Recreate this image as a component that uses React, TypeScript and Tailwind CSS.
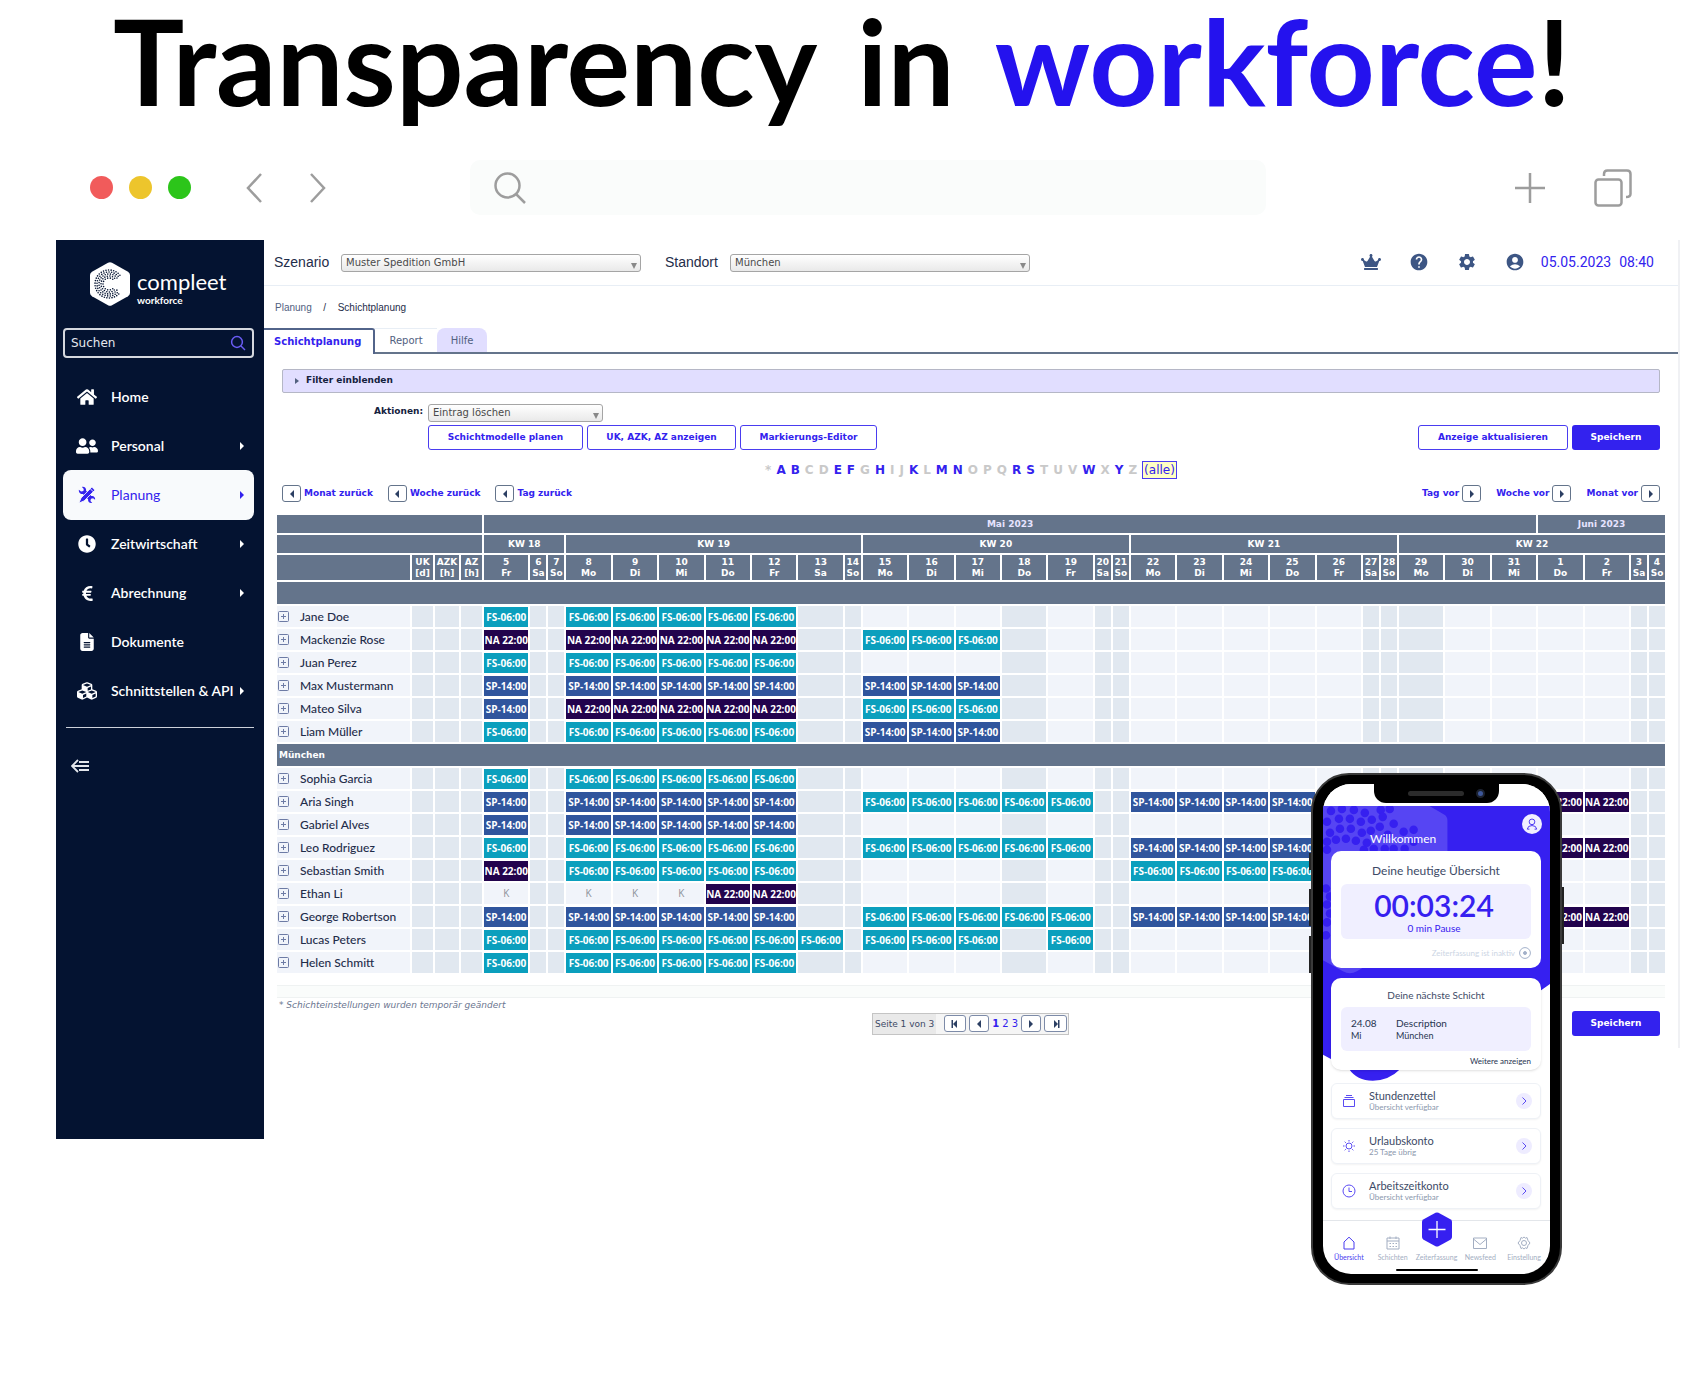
import type { ReactNode } from "react";
import clsx from "clsx";
import { FaClock, FaCrown, FaCubes, FaEuroSign, FaHome, FaUserFriends } from "react-icons/fa";
import { FaFileLines } from "react-icons/fa6";
import { MdAccountCircle, MdHelp, MdSettings } from "react-icons/md";

const days = [
  { day: 5, name: "Fr" },
  { day: 6, name: "Sa", narrow: true, off: true },
  { day: 7, name: "So", narrow: true, off: true },
  { day: 8, name: "Mo" },
  { day: 9, name: "Di" },
  { day: 10, name: "Mi" },
  { day: 11, name: "Do" },
  { day: 12, name: "Fr" },
  { day: 13, name: "Sa", off: true },
  { day: 14, name: "So", narrow: true, off: true },
  { day: 15, name: "Mo" },
  { day: 16, name: "Di" },
  { day: 17, name: "Mi" },
  { day: 18, name: "Do", off: true },
  { day: 19, name: "Fr" },
  { day: 20, name: "Sa", narrow: true, off: true },
  { day: 21, name: "So", narrow: true, off: true },
  { day: 22, name: "Mo" },
  { day: 23, name: "Di" },
  { day: 24, name: "Mi" },
  { day: 25, name: "Do" },
  { day: 26, name: "Fr" },
  { day: 27, name: "Sa", narrow: true, off: true },
  { day: 28, name: "So", narrow: true, off: true },
  { day: 29, name: "Mo", off: true },
  { day: 30, name: "Di" },
  { day: 31, name: "Mi" },
  { day: 1, name: "Do" },
  { day: 2, name: "Fr" },
  { day: 3, name: "Sa", narrow: true, off: true },
  { day: 4, name: "So", narrow: true, off: true },
];

// one letter per day, weeks split by a blank: F = early, S = late, N = night, K = sick
const groups = [
  {
    title: "",
    people: [
      { name: "Jane Doe", plan: "F.. FFFFF.. ....... ....... ......." },
      { name: "Mackenzie Rose", plan: "N.. NNNNN.. FFF.... ....... ......." },
      { name: "Juan Perez", plan: "F.. FFFFF.. ....... ....... ......." },
      { name: "Max Mustermann", plan: "S.. SSSSS.. SSS.... ....... ......." },
      { name: "Mateo Silva", plan: "S.. NNNNN.. FFF.... ....... ......." },
      { name: "Liam Müller", plan: "F.. FFFFF.. SSS.... ....... ......." },
    ],
  },
  {
    title: "München",
    people: [
      { name: "Sophia Garcia", plan: "F.. FFFFF.. ....... ....... ......." },
      { name: "Aria Singh", plan: "S.. SSSSS.. FFFFF.. SSSS... ...NN.." },
      { name: "Gabriel Alves", plan: "S.. SSSSS.. ....... ....... ......." },
      { name: "Leo Rodriguez", plan: "F.. FFFFF.. FFFFF.. SSSS... ...NN.." },
      { name: "Sebastian Smith", plan: "N.. FFFFF.. ....... FFFF... ......." },
      { name: "Ethan Li", plan: "K.. KKKNN.. ....... ....... ......." },
      { name: "George Robertson", plan: "S.. SSSSS.. FFFFF.. SSSS... ...NN.." },
      { name: "Lucas Peters", plan: "F.. FFFFFF. FFF.F.. ....... ......." },
      { name: "Helen Schmitt", plan: "F.. FFFFF.. ....... ....... ......." },
    ],
  },
];

const shifts: Record<string, { label: string; cls: string }> = {
  F: { label: "FS-06:00", cls: "bg-[#0b9fbd] text-white font-bold border-t" },
  S: { label: "SP-14:00", cls: "bg-[#30559d] text-white font-bold border-t" },
  N: { label: "NA 22:00", cls: "bg-[#22034d] text-white font-bold border-t" },
  K: { label: "K", cls: "bg-[#f1f4fa] text-[#8d929b]" },
};

const letters = "*ABCDEFGHIJKLMNOPQRSTUVWXYZ".split("");
const activeLetters = "ABEFHKMNRSWY";

const sans = "font-['DejaVu_Sans',sans-serif]";
const head = "border-white border-r-2 border-b-2 bg-[#64748b] p-0 text-center font-bold";

function PlanIcon() {
  return (
    <svg viewBox="0 0 20 20" className="size-[18px]" fill="currentColor">
      <path d="M1 4.2 3.4 6.2 6 5.6 6.4 3.2 4.4 1C6.600 .4 8.800 1.800 9 4.200L9 5.400 14.800 11.200C17.400 10.600 19.600 12.800 19 15.400L16.800 13.600 14.400 14.200 13.800 16.600 15.800 18.800C13 19.600 10.800 17.400 11.200 14.600L5.400 8.800C2.800 9.400.4 7 1 4.200Z" />
      <path
        d="M15.400 1.200 18.800 4.600 6.800 16.600 1 19 3.400 13.200Z"
        stroke="#f8fafc"
        strokeWidth="1"
      />
      <path d="M13.600 3 17 6.400" stroke="#f8fafc" strokeWidth="1" />
    </svg>
  );
}

const menu: { label: string; icon: ReactNode; sub?: boolean; active?: boolean }[] = [
  { label: "Home", icon: <FaHome size={20} /> },
  { label: "Personal", icon: <FaUserFriends size={22} />, sub: true },
  { label: "Planung", icon: <PlanIcon />, sub: true, active: true },
  { label: "Zeitwirtschaft", icon: <FaClock size={18} />, sub: true },
  { label: "Abrechnung", icon: <FaEuroSign size={17} />, sub: true },
  { label: "Dokumente", icon: <FaFileLines size={18} /> },
  { label: "Schnittstellen & API", icon: <FaCubes size={20} />, sub: true },
];

function Logo() {
  const dots: ReactNode[] = [];
  [6, 8, 10, 12, 14].forEach((r, ring) => {
    const n = 14 + ring * 5;
    for (let i = 0; i < n; i++) {
      const a = (i / n) * Math.PI * 2 + ring * 0.2;
      // leave the opening of the C free
      if (Math.cos(a) > 0.8) continue;
      dots.push(<circle key={`${r}-${i}`} cx={19 + r * Math.cos(a)} cy={22 + r * Math.sin(a)} r="0.8" />);
    }
  });
  return (
    <svg viewBox="0 0 40 44" className="h-[44px] w-10 shrink-0">
      <path
        d="M18 .8Q20 -.2 22 .8L38 9.800Q40 11 40 13V31Q40 33 38 34.200L22 43.200Q20 44.200 18 43.200L2 34.200Q0 33 0 31V13Q0 11 2 9.800Z"
        fill="#fff"
      />
      <g fill="#041331">{dots}</g>
    </svg>
  );
}

function Caret({ left = false, bar = false }: { left?: boolean; bar?: boolean }) {
  return (
    <svg viewBox="0 0 8 8" className={clsx("size-2", left && "rotate-180")} fill="currentColor">
      <path d="M2 0 6 4 2 8Z" />
      {bar && <path d="M6 0H7.500V8H6Z" />}
    </svg>
  );
}

function Select({ id, value, className }: { id: string; value: string; className: string }) {
  return (
    <div className={clsx("relative", className)}>
      <select
        id={id}
        className="block h-[18px] w-full appearance-none rounded-[3px] border border-[#a5a5a5] bg-linear-to-b from-white to-[#e9e9e9] pl-1 text-[10px] leading-4 text-[#4a4a4a]"
      >
        <option>{value}</option>
      </select>
      <svg viewBox="0 0 6 6" className="pointer-events-none absolute right-1 bottom-[3px] size-[6px]" fill="#888">
        <path d="M0 0H6L3 6Z" />
      </svg>
    </div>
  );
}

function Sidebar() {
  return (
    <aside className="flex w-[208px] shrink-0 flex-col bg-[#041331] font-[Lato,sans-serif] text-white">
      <div className="flex h-[88px] items-center pl-[34px]">
        <Logo />
        <div className="pt-2 pl-[7px]">
          <div className="text-[22px] leading-6">compleet</div>
          <div className="text-[10px] leading-3 font-bold">workforce</div>
        </div>
      </div>
      <div className="mr-[10px] ml-[7px] flex h-[30px] items-center rounded-[4px] border-2 border-[#d5d8de] px-[6px]">
        <input
          aria-label="Suchen"
          placeholder="Suchen"
          className={clsx("min-w-0 flex-1 text-xs outline-none placeholder:text-[#e6e8ee]", sans)}
        />
        <svg viewBox="0 0 16 16" className="size-4" fill="none" stroke="#6a5cf5" strokeWidth="1.500">
          <circle cx="7" cy="7" r="5.400" />
          <path d="M11 11 15 15" />
        </svg>
      </div>
      <nav className="mt-[14px] mr-[10px] ml-[7px] flex flex-col">
        {menu.map((m) => (
          <a
            key={m.label}
            href="#"
            className={clsx(
              "flex h-[50px] items-center rounded-lg pr-2 text-sm -mb-px",
              m.active ? "bg-[#f8fafc] text-[#3322ee]" : "font-semibold"
            )}
          >
            <span className="flex w-12 justify-center">{m.icon}</span>
            <span className="flex-1 whitespace-nowrap">{m.label}</span>
            {m.sub && <Caret />}
          </a>
        ))}
      </nav>
      <div className="mx-[10px] mt-3 h-px bg-[#cdd1da]" />
      <button aria-label="Menü einklappen" className="mt-[31px] ml-[15px] w-5">
        <svg viewBox="0 0 20 14" className="h-[14px] w-5" fill="none" stroke="#e3e6ec" strokeWidth="1.800">
          <path d="M7 1 1 7 7 13M1 7H18M8 3H18M8 11H18" />
        </svg>
      </button>
    </aside>
  );
}

function Header() {
  return (
    <header className="flex h-[46px] items-center border-b border-[#e8eef5] pr-6 pb-[2px] pl-[10px] text-[#1f2d4a]">
      <label htmlFor="szenario" className="w-[67px] font-['Liberation_Sans',sans-serif] text-sm">
        Szenario
      </label>
      <Select id="szenario" value="Muster Spedition GmbH" className="mt-[2px] w-[300px]" />
      <label htmlFor="standort" className="ml-6 w-[65px] font-['Liberation_Sans',sans-serif] text-sm">
        Standort
      </label>
      <Select id="standort" value="München" className="mt-[2px] w-[300px]" />
      <div className="mr-[2px] ml-auto flex items-center text-[#3d5684]">
        <button aria-label="Premium" className="flex w-12 justify-center"><FaCrown size={20} /></button>
        <button aria-label="Hilfe" className="flex w-12 justify-center"><MdHelp size={20} /></button>
        <button aria-label="Einstellungen" className="flex w-12 justify-center"><MdSettings size={20} /></button>
        <button aria-label="Konto" className="flex w-12 justify-center"><MdAccountCircle size={20} /></button>
      </div>
      <div className="flex gap-2 font-[Roboto,sans-serif] text-sm text-[#3322ee]">
        <span>05.05.2023</span>
        <span>08:40</span>
      </div>
    </header>
  );
}

function OutlineButton({ children, className }: { children: string; className: string }) {
  return (
    <button
      className={clsx(
        "h-[25px] rounded-[3px] border border-[#4a3cf0] bg-white text-[9px] font-bold whitespace-nowrap text-[#3322ee]",
        className
      )}
    >
      {children}
    </button>
  );
}

function SaveButton() {
  return <button className="h-[25px] w-[88px] rounded-[3px] bg-[#3322ee] text-[9px] font-bold text-white">Speichern</button>;
}

function Jump({ label, back = false }: { label: string; back?: boolean }) {
  return (
    <button className={clsx("flex items-center gap-[3px] text-[9px] font-bold text-[#3322ee]", !back && "flex-row-reverse")}>
      <span className="flex h-[17px] w-[19px] items-center justify-center rounded-[3px] border border-[#64748b] text-[#2c3f63]">
        <Caret left={back} />
      </span>
      {label}
    </button>
  );
}

function Schedule() {
  return (
    <table className="w-full table-fixed border-separate border-spacing-0 text-[9px] leading-[11px] text-white">
      <colgroup>
        <col className="w-[135px]" />
        <col className="w-[23px]" />
        <col className="w-[26px]" />
        <col className="w-[23px]" />
        {days.map((d, i) => (
          <col key={i} className={d.narrow ? "w-[18px]" : ""} />
        ))}
      </colgroup>
      <thead>
        <tr className="h-5 text-[#e6e3ff]">
          <th colSpan={4} className={head} />
          <th colSpan={27} className={head}>Mai 2023</th>
          <th colSpan={4} className={head}>Juni 2023</th>
        </tr>
        <tr className="h-5">
          <th colSpan={4} className={head} />
          <th colSpan={3} className={head}>KW 18</th>
          <th colSpan={7} className={head}>KW 19</th>
          <th colSpan={7} className={head}>KW 20</th>
          <th colSpan={7} className={head}>KW 21</th>
          <th colSpan={7} className={head}>KW 22</th>
        </tr>
        <tr className="h-[27px]">
          <th className={head} />
          <th className={head}>UK<br />[d]</th>
          <th className={head}>AZK<br />[h]</th>
          <th className={head}>AZ<br />[h]</th>
          {days.map((d, i) => (
            <th key={i} className={head}>
              {d.day}<br />{d.name}
            </th>
          ))}
        </tr>
      </thead>
      {groups.map((g) => (
        <tbody key={g.title}>
          <tr className="h-6">
            <th colSpan={35} className="border-r-2 border-b-2 border-white bg-[#64748b] px-[2px] text-left font-bold">
              {g.title}
            </th>
          </tr>
          {g.people.map((p) => (
            <tr key={p.name} className="h-[23px] font-['Open_Sans',sans-serif] text-[10px]">
              <td className="border-r-2 border-b-2 border-white bg-[#f1f4fa] p-0">
                <div className="flex items-center gap-[11px] pl-px">
                  <button aria-label={p.name + " aufklappen"} className="text-[#6d7ba5]">
                    <svg viewBox="0 0 11 11" className="size-[11px]" fill="none" stroke="currentColor">
                      <rect x=".5" y=".5" width="10" height="10" rx="1" />
                      <path d="M3 5.500H8M5.500 3V8" />
                    </svg>
                  </button>
                  <span className="font-[Lato,sans-serif] text-xs leading-4 font-medium text-[#1f2d4a]">{p.name}</span>
                </div>
              </td>
              {[0, 1, 2].map((n) => (
                <td key={n} className="border-r-2 border-b-2 border-white bg-[#e1e8f0] p-0" />
              ))}
              {p.plan.replaceAll(" ", "").split("").map((c, i) => (
                <td
                  key={i}
                  className={clsx(
                    "border-r-2 border-b-2 border-white p-0 text-center whitespace-nowrap",
                    shifts[c] ? shifts[c].cls : days[i].off ? "bg-[#e1e8f0]" : "bg-[#f1f4fa]"
                  )}
                >
                  {shifts[c]?.label}
                </td>
              ))}
            </tr>
          ))}
        </tbody>
      ))}
    </table>
  );
}

const pagerBtn = "flex h-[17px] items-center justify-center rounded-[3px] border border-[#7d8ba8] bg-white text-[#2c3f63]";

function Planner() {
  return (
    <main className={clsx("min-w-0 flex-1 self-start border-r-2 border-[#f0f1f4] pb-3 text-[10px]", sans)}>
      <Header />
      <div className="flex h-[42px] items-center pl-[11px] font-['Liberation_Sans',sans-serif] text-[10px] text-[#1f2d4a]">
        <a href="#" className="text-[#52617f]">Planung</a>
        <span className="w-[26px] text-center">/</span>
        <span>Schichtplanung</span>
      </div>
      <div className="flex h-[26px] items-stretch">
        <button className="w-[111px] rounded-tr-[3px] border-t-2 border-r-2 border-[#52648a] pb-[2px] pl-[10px] text-left font-bold text-[#3322ee]">
          Schichtplanung
        </button>
        <div className="flex flex-1 border-b-2 border-[#64748b] text-[#52617f]">
          <button className="w-[62px] border-t border-[#e8eef5]">Report</button>
          <button className="w-[50px] rounded-t-lg bg-[#e1deff] pt-px">Hilfe</button>
        </div>
      </div>
      <div className="px-[13px]">
        <div className="px-[5px]">
          <button className="mt-[15px] flex h-6 w-full items-center gap-[7px] rounded-[2px] border border-[#b5b7c6] bg-[#e1deff] pl-3 text-[9px] font-bold text-[#14213d]">
            <svg viewBox="0 0 4 6" className="h-[6px] w-1" fill="#52617f">
              <path d="M0 0 4 3 0 6Z" />
            </svg>
            Filter einblenden
          </button>
          <div className="mt-[11px] flex h-[18px] items-start pl-[92px]">
            <label htmlFor="aktionen" className="w-[54px] text-[9px] leading-[14px] font-bold text-[#14213d]">
              Aktionen:
            </label>
            <Select id="aktionen" value="Eintrag löschen" className="w-[175px]" />
          </div>
          <div className="mt-[3px] flex gap-1 pl-[146px]">
            <OutlineButton className="w-[155px]">Schichtmodelle planen</OutlineButton>
            <OutlineButton className="w-[149px]">UK, AZK, AZ anzeigen</OutlineButton>
            <OutlineButton className="w-[137px]">Markierungs-Editor</OutlineButton>
            <OutlineButton className="ml-auto w-[150px]">Anzeige aktualisieren</OutlineButton>
            <SaveButton />
          </div>
          <div className="mt-[11px] flex h-[18px] items-center justify-center gap-[5px] text-xs font-bold text-[#c9c9c9]">
            {letters.map((l) =>
              activeLetters.includes(l) ? (
                <a key={l} href="#" className="text-[#3322ee]">{l}</a>
              ) : (
                <span key={l} className="font-semibold">{l}</span>
              )
            )}
            <a href="#" className="border border-[#4a3cf0] bg-[#ffffc4] px-px leading-4 font-normal text-[#3322ee]">
              (alle)
            </a>
          </div>
          <div className="mt-[6px] flex justify-between">
            <div className="flex gap-[15px]">
              <Jump back label="Monat zurück" />
              <Jump back label="Woche zurück" />
              <Jump back label="Tag zurück" />
            </div>
            <div className="flex gap-[15px]">
              <Jump label="Tag vor" />
              <Jump label="Woche vor" />
              <Jump label="Monat vor" />
            </div>
          </div>
        </div>
        <div className="mt-[13px] -mr-[2px]">
          <Schedule />
        </div>
        <div className="mt-[10px] h-[13px] border-t border-b border-[#eff2f2] bg-[#fafcfb]" />
        <p className="px-[2px] pt-px text-[9px] leading-3 text-[#6b7690] italic">* Schichteinstellungen wurden temporär geändert</p>
        <div className="flex items-center px-[5px]">
          <div className="w-[87px]" />
          <div className="flex flex-1 justify-center">
            <div className="flex h-[22px] items-center gap-[3px] border border-[#c4c4c4] bg-[#f5f5f5] pr-px text-[#3322ee]">
              <span className="mr-[5px] self-stretch bg-[#e9e9e9] px-[2px] text-[9px] leading-5 text-[#3d4a66]">Seite 1 von 3</span>
              <button aria-label="Erste Seite" className={clsx("w-[22px]", pagerBtn)}><Caret left bar /></button>
              <button aria-label="Vorherige Seite" className={clsx("w-5", pagerBtn)}><Caret left /></button>
              <a href="#" className="font-bold">1</a>
              <a href="#">2</a>
              <a href="#">3</a>
              <button aria-label="Nächste Seite" className={clsx("w-5", pagerBtn)}><Caret /></button>
              <button aria-label="Letzte Seite" className={clsx("w-[23px]", pagerBtn)}><Caret bar /></button>
            </div>
          </div>
          <SaveButton />
        </div>
      </div>
    </main>
  );
}

const dots = [
  [8, 27], [19, 25], [31, 26], [42, 29], [58, 26], [67, 25], [16, 35], [27, 35], [38, 38], [49, 36], [60, 33], [4, 38],
  [7, 49], [17, 45], [28, 45], [39, 49], [48, 47], [57, 43], [71, 40], [81, 48], [91, 46], [4, 58], [13, 56], [23, 55],
  [33, 57], [44, 59], [65, 51], [41, 66], [51, 65], [62, 65], [71, 65], [82, 65], [91, 58], [4, 66], [3, 105],
  [7, 113], [4, 121], [7, 130], [4, 139], [3, 152],
];

const accounts = [
  {
    title: "Stundenzettel",
    sub: "Übersicht verfügbar",
    icon: <path d="M1.500 5.500H12.500V12.500H1.500ZM2.500 3.500H11.500M4 1.500H10" />,
  },
  {
    title: "Urlaubskonto",
    sub: "25 Tage übrig",
    icon: (
      <>
        <circle cx="7" cy="7" r="3" />
        <path d="M7 1V2.500M7 11.500V13M1 7H2.500M11.500 7H13M2.700 2.700 3.800 3.800M10.200 10.200 11.300 11.300M11.300 2.700 10.200 3.800M3.800 10.200 2.700 11.300" />
      </>
    ),
  },
  {
    title: "Arbeitszeitkonto",
    sub: "Übersicht verfügbar",
    icon: (
      <>
        <circle cx="7" cy="7" r="6" />
        <path d="M7 3.500V7.500H10" />
      </>
    ),
  },
];

const tabs = [
  { label: "Übersicht", active: true, icon: <path d="M2 6 7 1.200 12 6V13H2Z" /> },
  {
    label: "Schichten",
    icon: <path d="M1 2H13V13H1ZM1 5H13M4 .5V3M10 .5V3M3.500 7.500H5M6.500 7.500H8M9.500 7.500H11M3.500 10.500H5M6.500 10.500H8M9.500 10.500H11" />,
  },
  { label: "Zeiterfassung", icon: null },
  { label: "Newsfeed", icon: <path d="M.5 2H13.500V12.500H.5ZM.5 3 7 8.500 13.500 3" /> },
  {
    label: "Einstellung",
    icon: (
      <>
        <path d="M4 1.500 5.500 2.200 7 1 8.500 2.200 10 1.500 11 4.500 13 7 11 9.500 10 12.500 8.500 11.800 7 13 5.500 11.800 4 12.500 3 9.500 1 7 3 4.500Z" />
        <circle cx="7" cy="7" r="2.500" />
      </>
    ),
  },
];

function Phone() {
  return (
    <div className="absolute top-[773px] right-[138px] w-[251px] font-[Lato,sans-serif]">
      <div className="absolute top-[80px] -left-[2px] h-[17px] w-1 bg-[#222]" />
      <div className="absolute top-[116px] -left-[2px] h-[37px] w-1 bg-[#222]" />
      <div className="absolute top-[163px] -left-[2px] h-[37px] w-1 bg-[#222]" />
      <div className="absolute top-[114px] -right-[2px] h-[57px] w-1 bg-[#222]" />
      <div className="relative rounded-[38px] border-2 border-[#3a3a3a] bg-black px-[10px] pt-[9px] pb-[9px] text-[#3d4a66]">
        <div className="relative flex flex-col overflow-hidden rounded-[28px] bg-white">
          <svg viewBox="0 0 228 300" className="absolute top-0 left-0 w-full">
            <path d="M0 22H228V201L218 208 78 286Q66 298 50 298T26 286L0 272Z" fill="#3620f0" />
            <path d="M0 22H107L122 31Q125 33 125 37V135L34 188Q27 192 20 188L0 177Z" fill="#5645f3" />
            {dots.map(([x, y]) => (
              <circle key={`${x}-${y}`} cx={x} cy={y} r="4.300" fill="#3620f0" />
            ))}
          </svg>
          <div className="relative flex h-[22px] justify-center bg-white">
            <div className="flex h-[19px] w-[125px] items-center justify-center gap-3 rounded-b-xl bg-black pl-5">
              <span className="h-[5px] w-14 rounded-full bg-[#2b2b2b]" />
              <span className="size-[9px] rounded-full border-2 border-[#1c2230] bg-[#3d5799]" />
            </div>
          </div>
          <div className="relative flex h-[45px] justify-between pt-2 pr-2 pb-1 pl-[47px] text-xs text-white">
            <span className="self-end leading-4">Willkommen</span>
            <button aria-label="Profil" className="flex size-5 items-center justify-center rounded-full bg-[#f1f0ff]">
              <svg viewBox="0 0 14 14" className="size-3" fill="none" stroke="#3620f0">
                <circle cx="7" cy="4.500" r="3.300" />
                <path d="M1.500 13Q2 8.800 7 8.800T12.500 13H10M1.500 13H4" />
              </svg>
            </button>
          </div>
          <section className="relative mr-[9px] ml-2 flex h-[117px] flex-col rounded-[10px] bg-white px-[10px] text-center">
            <h2 className="pt-3 text-xs leading-4">Deine heutige Übersicht</h2>
            <div className="mt-[5px] h-[55px] rounded-md bg-[#f0efff] pt-[6px] pr-1 text-[#3620f0]">
              <div className="text-[30px] leading-[30px] font-semibold">00:03:24</div>
              <div className="text-[10px] leading-4">0 min Pause</div>
            </div>
            <div className="mt-2 flex items-center justify-end gap-1 text-[8px] leading-3 text-[#ccd5e4]">
              Zeiterfassung ist inaktiv
              <svg viewBox="0 0 12 12" className="size-3" fill="none" stroke="#a3b1ca">
                <circle cx="6" cy="6" r="5.400" />
                <circle cx="6" cy="6" r="1.500" fill="#a3b1ca" />
              </svg>
            </div>
          </section>
          <section className="relative mt-[10px] mr-[9px] ml-2 flex h-[92px] flex-col rounded-[10px] bg-white px-[10px] shadow-sm">
            <h2 className="pt-[9px] text-center text-[10px] leading-4">Deine nächste Schicht</h2>
            <div className="mt-1 grid h-11 grid-cols-[45px_1fr] content-center rounded-md bg-[#f0efff] pl-[10px] text-[#27344f]">
              <span className="text-[10px] leading-[14px]">24.08</span>
              <span className="text-[10px] leading-[14px]">Description</span>
              <span className="text-[9px] leading-3">Mi</span>
              <span className="text-[9px] leading-3">München</span>
            </div>
            <a href="#" className="mt-1 text-right text-[8px] leading-3 text-[#27344f]">Weitere anzeigen</a>
          </section>
          <ul className="relative mt-[13px] mr-[9px] ml-2 flex flex-col gap-[9px]">
            {accounts.map((a) => (
              <li key={a.title} className="flex h-9 items-center rounded-md border border-[#eef1f6] bg-white pr-2 pl-[10px] shadow-xs">
                <svg viewBox="0 0 14 14" className="size-[14px]" fill="none" stroke="#5a4bf3">
                  {a.icon}
                </svg>
                <div className="flex-1 pl-[13px]">
                  <div className="text-[11px] leading-3">{a.title}</div>
                  <div className="text-[8px] leading-[11px] text-[#8b97ad]">{a.sub}</div>
                </div>
                <button aria-label={a.title + " öffnen"} className="flex size-4 items-center justify-center rounded-full bg-[#eeecff]">
                  <svg viewBox="0 0 8 8" className="size-2" fill="none" stroke="#5a4bf3">
                    <path d="M2.500 .5 6 4 2.500 7.500" />
                  </svg>
                </button>
              </li>
            ))}
          </ul>
          <nav className="relative mt-[11px] flex h-[54px] justify-center border-t border-[#e3e6ea] px-1">
            {tabs.map((t) => (
              <a
                key={t.label}
                href="#"
                className={clsx("flex w-11 flex-col items-center pt-[15px] text-[7px]", t.active ? "text-[#4a3cf0]" : "text-[#a3aec2]")}
              >
                <svg viewBox="0 0 14 14" className="size-[14px]" fill="none" stroke="currentColor">
                  {t.icon}
                </svg>
                <span className="mt-[2px] leading-[10px]">{t.label}</span>
              </a>
            ))}
            <button aria-label="Zeit erfassen" className="absolute -top-[9px] left-1/2 -translate-x-1/2">
              <svg viewBox="0 0 30 35" className="h-[35px] w-[30px]">
                <path d="M13.500 .8Q15 0 16.500 .8L28.800 7.600Q30 8.500 30 10V25Q30 26.500 28.800 27.400L16.500 34.200Q15 35 13.500 34.200L1.200 27.400Q0 26.500 0 25V10Q0 8.500 1.200 7.600Z" fill="#3620f0" />
                <path d="M15 9V26M6.500 17.500H23.500" stroke="#fff" strokeWidth="1.300" />
              </svg>
            </button>
            <span className="absolute bottom-[3px] left-1/2 h-[2px] w-[82px] -translate-x-1/2 rounded-full bg-black" />
          </nav>
        </div>
      </div>
    </div>
  );
}

export default function App() {
  return (
    <div className="relative min-h-screen bg-white">
      <h1 className="flex h-[137px] justify-center gap-10 pr-4 font-[Lato,sans-serif] text-[119px] leading-[121px] font-bold whitespace-nowrap text-black">
        <span>Transparency</span>
        <span>in</span>
        <span>
          <span className="text-[#2412ee]">workforce</span>!
        </span>
      </h1>
      <div className="mr-5 ml-14 rounded-t-3xl">
        <div className="flex h-[103px] items-center pr-12 pb-[2px] pl-[34px] text-[#9d9d9d]">
          <div className="flex gap-4">
            <span className="size-[23px] rounded-full bg-[#f15b5b]" />
            <span className="size-[23px] rounded-full bg-[#edc52c]" />
            <span className="size-[23px] rounded-full bg-[#2cc51a]" />
          </div>
          <div className="flex w-[279px] gap-12 pl-[55px]">
            <button aria-label="Zurück">
              <svg viewBox="0 0 16 30" className="h-[30px] w-4" fill="none" stroke="currentColor" strokeWidth="2.500">
                <path d="M15 1 2 15 15 29" />
              </svg>
            </button>
            <button aria-label="Vor">
              <svg viewBox="0 0 16 30" className="h-[30px] w-4" fill="none" stroke="currentColor" strokeWidth="2.500">
                <path d="M1 1 14 15 1 29" />
              </svg>
            </button>
          </div>
          <div className="flex h-[55px] flex-1 items-center gap-3 rounded-[10px] bg-[#fafcfb] pl-6">
            <svg viewBox="0 0 32 32" className="size-8" fill="none" stroke="currentColor" strokeWidth="2.500">
              <circle cx="13.500" cy="13.500" r="12" />
              <path d="M22 22 31 31" />
            </svg>
            <input aria-label="Adresse" className="min-w-0 flex-1 outline-none" />
          </div>
          <button aria-label="Neuer Tab" className="ml-[248px]">
            <svg viewBox="0 0 32 32" className="size-8" fill="none" stroke="currentColor" strokeWidth="2.500">
              <path d="M16 1V31M1 16H31" />
            </svg>
          </button>
          <button aria-label="Fenster" className="ml-12">
            <svg viewBox="0 0 38 38" className="size-[38px]" fill="none" stroke="currentColor" strokeWidth="2.500">
              <rect x="1.500" y="10.500" width="26" height="26" rx="3" />
              <path d="M10 7V5Q10 1.500 13.500 1.500H33Q36.500 1.500 36.500 5V25Q36.500 28 32 28" />
            </svg>
          </button>
        </div>
        <div className="flex min-h-[899px]">
          <Sidebar />
          <Planner />
        </div>
      </div>
      <Phone />
    </div>
  );
}
